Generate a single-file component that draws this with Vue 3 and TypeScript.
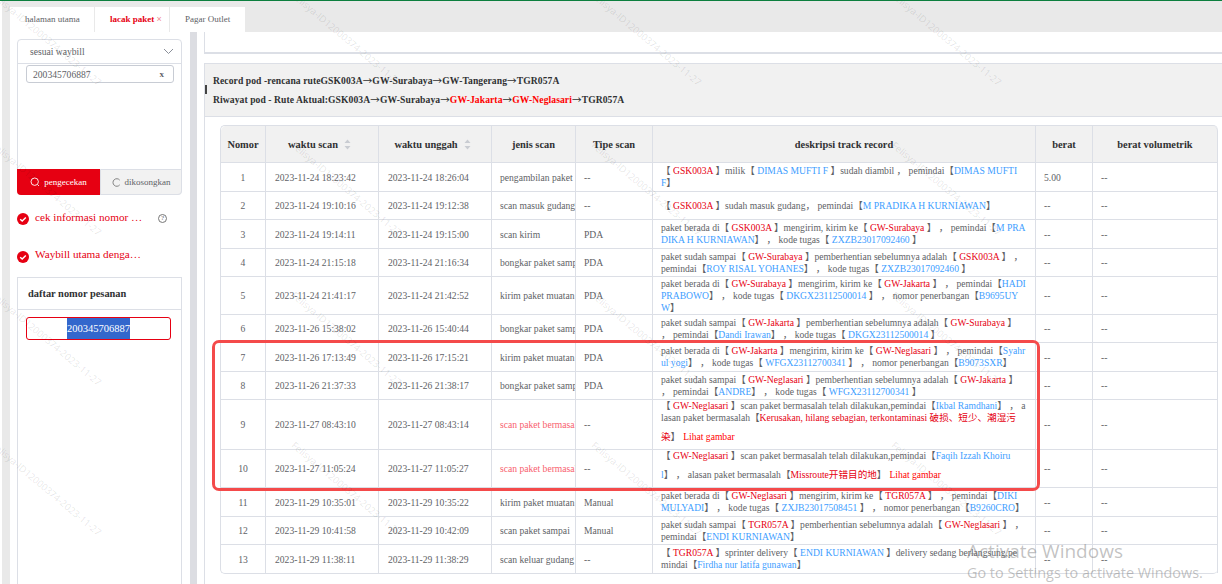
<script setup lang="ts">
interface Row {
  no: number
  scan: string
  upload: string
  type: string
  tipe: string
  desc: string
  berat: string
  h: number
  warn?: boolean
}

const rows: Row[] = [
  { no: 1, scan: '2023-11-24 18:23:42', upload: '2023-11-24 18:26:04', type: 'pengambilan paket', tipe: '--', berat: '5.00', h: 29, desc: '【 ~GSK003A~ 】milik【 ^DIMAS MUFTI F^ 】sudah diambil ， pemindai【^DIMAS MUFTI F^】' },
  { no: 2, scan: '2023-11-24 19:10:16', upload: '2023-11-24 19:12:38', type: 'scan masuk gudang', tipe: '--', berat: '--', h: 28, desc: '【 ~GSK003A~ 】sudah masuk gudang， pemindai【^M PRADIKA H KURNIAWAN^】' },
  { no: 3, scan: '2023-11-24 19:14:11', upload: '2023-11-24 19:15:00', type: 'scan kirim', tipe: 'PDA', berat: '--', h: 29, desc: 'paket berada di【 ~GSK003A~ 】mengirim, kirim ke【 ~GW-Surabaya~ 】 ， pemindai【^M PRADIKA H KURNIAWAN^】 ， kode tugas【 ^ZXZB23017092460^ 】' },
  { no: 4, scan: '2023-11-24 21:15:18', upload: '2023-11-24 21:16:34', type: 'bongkar paket sampai', tipe: 'PDA', berat: '--', h: 28, desc: 'paket sudah sampai【 ~GW-Surabaya~ 】pemberhentian sebelumnya adalah【 ~GSK003A~ 】 ， pemindai【^ROY RISAL YOHANES^】 ， kode tugas【 ^ZXZB23017092460^ 】' },
  { no: 5, scan: '2023-11-24 21:41:17', upload: '2023-11-24 21:42:52', type: 'kirim paket muatan', tipe: 'PDA', berat: '--', h: 38, desc: 'paket berada di【 ~GW-Surabaya~ 】mengirim, kirim ke【 ~GW-Jakarta~ 】 ， pemindai【^HADI PRABOWO^】 ， kode tugas【 ^DKGX23112500014^ 】 ， nomor penerbangan【^B9695UYW^】' },
  { no: 6, scan: '2023-11-26 15:38:02', upload: '2023-11-26 15:40:44', type: 'bongkar paket sampai', tipe: 'PDA', berat: '--', h: 28, desc: 'paket sudah sampai【 ~GW-Jakarta~ 】pemberhentian sebelumnya adalah【 ~GW-Surabaya~ 】 ， pemindai【^Dandi Irawan^】 ， kode tugas【 ^DKGX23112500014^ 】' },
  { no: 7, scan: '2023-11-26 17:13:49', upload: '2023-11-26 17:15:21', type: 'kirim paket muatan', tipe: 'PDA', berat: '--', h: 29, desc: 'paket berada di【 ~GW-Jakarta~ 】mengirim, kirim ke【 ~GW-Neglasari~ 】 ， pemindai【^Syahrul yogi^】 ， kode tugas【 ^WFGX23112700341^ 】 ， nomor penerbangan【^B9073SXR^】' },
  { no: 8, scan: '2023-11-26 21:37:33', upload: '2023-11-26 21:38:17', type: 'bongkar paket sampai', tipe: 'PDA', berat: '--', h: 28, desc: 'paket sudah sampai【 ~GW-Neglasari~ 】pemberhentian sebelumnya adalah【 ~GW-Jakarta~ 】 ， pemindai【^ANDRE^】 ， kode tugas【 ^WFGX23112700341^ 】' },
  { no: 9, scan: '2023-11-27 08:43:10', upload: '2023-11-27 08:43:14', type: 'scan paket bermasalah', tipe: '--', berat: '--', h: 49, warn: true, desc: '【 ~GW-Neglasari~ 】scan paket bermasalah telah dilakukan,pemindai【^Ikbal Ramdhani^】 ， alasan paket bermasalah【~Kerusakan, hilang sebagian, terkontaminasi 破损、短少、潮湿污染~】@Lihat gambar@' },
  { no: 10, scan: '2023-11-27 11:05:24', upload: '2023-11-27 11:05:27', type: 'scan paket bermasalah', tipe: '--', berat: '--', h: 38, warn: true, desc: '【 ~GW-Neglasari~ 】scan paket bermasalah telah dilakukan,pemindai【^Faqih Izzah Khoiru\nl^】 ， alasan paket bermasalah【~Missroute开错目的地~】@Lihat gambar@' },
  { no: 11, scan: '2023-11-29 10:35:01', upload: '2023-11-29 10:35:22', type: 'kirim paket muatan', tipe: 'Manual', berat: '--', h: 29, desc: 'paket berada di【 ~GW-Neglasari~ 】mengirim, kirim ke【 ~TGR057A~ 】 ， pemindai【^DIKI MULYADI^】 ， kode tugas【 ^ZXJB23017508451^ 】 ， nomor penerbangan【^B9260CRO^】' },
  { no: 12, scan: '2023-11-29 10:41:58', upload: '2023-11-29 10:42:09', type: 'scan paket sampai', tipe: 'Manual', berat: '--', h: 28, desc: 'paket sudah sampai【 ~TGR057A~ 】pemberhentian sebelumnya adalah【 ~GW-Neglasari~ 】 ， pemindai【^ENDI KURNIAWAN^】' },
  { no: 13, scan: '2023-11-29 11:38:11', upload: '2023-11-29 11:38:29', type: 'scan keluar gudang', tipe: '--', berat: '--', h: 28, desc: '【 ~TGR057A~ 】sprinter delivery【 ^ENDI KURNIAWAN^ 】delivery sedang berlangsung,pe\nmindai【^Firdha nur latifa gunawan^】' },
]

const parts = (s: string) =>
  s
    .split(/(~[^~]*~|\^[^^]*\^|@[^@]*@)/)
    .filter(Boolean)
    .map((p) => {
      const k = p[0]
      if (k === '~') return { c: 'red', t: p.slice(1, -1) }
      if (k === '^') return { c: 'blue', t: p.slice(1, -1) }
      if (k === '@') return { c: 'pic', t: p.slice(1, -1) }
      return { c: '', t: p }
    })

const routes = [
  [
    { t: 'Record pod -rencana ruteGSK003A', hot: false },
    { t: 'GW-Surabaya', hot: false },
    { t: 'GW-Tangerang', hot: false },
    { t: 'TGR057A', hot: false },
  ],
  [
    { t: 'Riwayat pod - Rute Aktual:GSK003A', hot: false },
    { t: 'GW-Surabaya', hot: false },
    { t: 'GW-Jakarta', hot: true },
    { t: 'GW-Neglasari', hot: true },
    { t: 'TGR057A', hot: false },
  ],
]

const marks: { x: number; y: number }[] = []
for (let j = 0; j < 4; j++) {
  for (let i = 0; i < 4; i++) marks.push({ x: 100 + i * 300, y: 83 + j * 150 })
}
</script>

<template>
  <div class="page">
    <div class="tabbar">
      <div class="tab">halaman utama</div>
      <div class="tab active">lacak paket <span class="close">×</span></div>
      <div class="tab">Pagar Outlet</div>
    </div>

    <div class="main">
      <aside class="side">
        <div class="query">
          <div class="select">
            <span>sesuai waybill</span>
            <svg class="chev" width="11" height="7" viewBox="0 0 11 7"><path d="M1 1l4.5 4.5L10 1" fill="none" stroke="#8a8f99" stroke-width="1" /></svg>
          </div>
          <div class="input"><span>200345706887</span><b>x</b></div>
          <div class="spacer"></div>
          <div class="btns">
            <div class="btn go">
              <svg width="10" height="10" viewBox="0 0 10 10"><circle cx="4.7" cy="4.7" r="3.7" fill="none" stroke="#fff" stroke-width=".9" /><path d="M7.5 7.5L9 9" stroke="#fff" stroke-width=".9" /></svg>
              pengecekan
            </div>
            <div class="btn clear">
              <svg width="9" height="9" viewBox="0 0 10 10"><path d="M8.6 2.4A4.2 4.2 0 1 0 8.6 7.6" fill="none" stroke="#777" stroke-width="1" /></svg>
              dikosongkan
            </div>
          </div>
        </div>

        <div class="notice first">
          <svg class="tick" width="12" height="12" viewBox="0 0 12 12"><circle cx="6" cy="6" r="6" fill="#e60012" /><path d="M3.2 6.2l2 1.8 3.6-3.6" fill="none" stroke="#fff" stroke-width="1.4" /></svg>
          <span class="ntext">cek informasi nomor …</span>
          <span class="help">?</span>
        </div>
        <div class="notice second">
          <svg class="tick" width="12" height="12" viewBox="0 0 12 12"><circle cx="6" cy="6" r="6" fill="#e60012" /><path d="M3.2 6.2l2 1.8 3.6-3.6" fill="none" stroke="#fff" stroke-width="1.4" /></svg>
          <span class="ntext">Waybill utama denga…</span>
        </div>

        <div class="orders">
          <div class="orders-head">daftar nomor pesanan</div>
          <div class="order-item"><span class="picked">200345706887</span></div>
        </div>
      </aside>

      <div class="gutter"></div>

      <section class="content">
        <div class="blank"></div>
        <div class="route">
          <p v-for="(line, l) in routes" :key="l">
            <template v-for="(seg, i) in line" :key="i"><span v-if="i" class="arrow">→</span><span :class="{ hot: seg.hot }">{{ seg.t }}</span></template>
          </p>
        </div>
        <div class="table-wrap">
          <table>
            <colgroup>
              <col class="c1" /><col class="c2" /><col class="c2" /><col class="c4" />
              <col class="c5" /><col class="c6" /><col class="c7" /><col class="c8" />
            </colgroup>
            <thead>
              <tr>
                <th>Nomor</th>
                <th>waktu scan<svg class="sort" width="7" height="11" viewBox="0 0 7 11"><path d="M3.5 0.5L6.5 4H.5zM3.5 10.5L.5 7h6z" fill="#c9ccd2" /></svg></th>
                <th>waktu unggah<svg class="sort" width="7" height="11" viewBox="0 0 7 11"><path d="M3.5 0.5L6.5 4H.5zM3.5 10.5L.5 7h6z" fill="#c9ccd2" /></svg></th>
                <th>jenis scan</th>
                <th>Tipe scan</th>
                <th>deskripsi track record</th>
                <th>berat</th>
                <th>berat volumetrik</th>
              </tr>
            </thead>
            <tbody>
              <tr v-for="r in rows" :key="r.no" :style="{ height: r.h + 'px' }">
                <td class="no">{{ r.no }}</td>
                <td class="time">{{ r.scan }}</td>
                <td class="time">{{ r.upload }}</td>
                <td class="clip" :class="{ warn: r.warn }">{{ r.type }}</td>
                <td>{{ r.tipe }}</td>
                <td class="desc"><span v-for="(p, i) in parts(r.desc)" :key="i" :class="p.c">{{ p.t }}</span></td>
                <td>{{ r.berat }}</td>
                <td>--</td>
              </tr>
            </tbody>
          </table>
        </div>
      </section>
    </div>

    <div class="callout"></div>

    <div class="marks">
      <span v-for="(m, i) in marks" :key="i" class="mark" :style="{ right: 1222 - m.x + 'px', top: m.y - 7 + 'px' }">Felisya-ID12000374-2023-11-27</span>
    </div>

    <div class="activate">
      <div class="a1">Activate Windows</div>
      <div class="a2">Go to Settings to activate Windows.</div>
    </div>
  </div>
</template>

<style>
html, body { margin: 0; padding: 0; background: #fff; }
</style>

<style scoped>
* { box-sizing: border-box; }
.page {
  position: relative;
  width: 1222px;
  height: 584px;
  overflow: hidden;
  font-family: "Liberation Serif", "Noto Sans CJK SC", serif;
  font-size: 9.6px;
  color: #606266;
  border-top: 1px solid #0c7f3e;
  display: flex;
  flex-direction: column;
  padding-left: 2px;
}
.tabbar {
  height: 31px;
  flex: none;
  background: #e9e9e9;
  padding: 6px 0 0 8px;
  display: flex;
  gap: 1px;
}
.tab {
  background: #fff;
  height: 25px;
  line-height: 24px;
  padding: 0 15px;
  font-size: 9px;
  color: #606266;
  white-space: nowrap;
}
.tab:first-child { width: 84px; }
.tab:nth-child(2) { width: 74px; }
.tab:nth-child(3) { width: 75px; }
.active { color: #e60012; font-weight: 700; }
.close { color: #f08a92; font-family: "Liberation Sans", sans-serif; font-size: 9px; font-weight: 400; }

.main {
  flex: 1;
  min-height: 0;
  display: flex;
  background: #e9e9e9;
  padding-left: 8px;
}
.side {
  width: 180px;
  flex: none;
  background: #fff;
  padding: 7px 8px 0 7px;
  display: flex;
  flex-direction: column;
}
.gutter { width: 7px; flex: none; background: #dcdde2; }
.query {
  height: 156px;
  border: 1px solid #dcdfe6;
  border-radius: 4px;
  display: flex;
  flex-direction: column;
}
.select {
  height: 24px;
  flex: none;
  border-bottom: 1px solid #dcdfe6;
  padding: 0 7px 0 12px;
  display: flex;
  align-items: center;
  justify-content: space-between;
}
.input {
  margin: 1px 7px 0 8px;
  height: 18px;
  flex: none;
  border: 1px solid #c8ccd4;
  border-radius: 3px;
  padding: 0 9px 0 6px;
  display: flex;
  align-items: center;
  justify-content: space-between;
}
.input b { font-size: 9px; }
.spacer { flex: 1; }
.btns { height: 26px; flex: none; display: flex; margin: 0 -1px -1px -1px; }
.btn {
  display: flex;
  align-items: center;
  justify-content: center;
  gap: 4px;
  line-height: 1;
  font-size: 9px;
}
.go { width: 83px; background: #e60012; color: #fff; border-radius: 0 0 0 4px; }
.clear {
  flex: 1;
  background: #f2f2f2;
  color: #606266;
  border: 1px solid #dcdfe6;
  border-radius: 0 0 4px 0;
}
.notice {
  display: flex;
  align-items: flex-start;
  position: relative;
  font-size: 11.2px;
  color: #e60012;
  line-height: 13px;
}
.first { margin-top: 16px; height: 37px; }
.second { height: 29px; }
.tick { flex: none; margin-top: 2px; }
.second .tick { margin-top: 3px; }
.ntext { margin-left: 6px; white-space: nowrap; }
.help {
  position: absolute;
  left: 141px;
  top: 3px;
  width: 9px;
  height: 9px;
  border: 1px solid #777;
  border-radius: 50%;
  font-size: 7px;
  line-height: 7px;
  text-align: center;
  color: #666;
}
.orders {
  flex: 1;
  border: 1px solid #dcdfe6;
  border-bottom: 0;
}
.orders-head {
  height: 32px;
  line-height: 31px;
  border-bottom: 1px solid #dcdfe6;
  padding-left: 10px;
  font-weight: 700;
  font-size: 10.4px;
  color: #303133;
}
.order-item {
  margin: 7px 0 0 8px;
  width: 145px;
  height: 23px;
  border: 1px solid #e60012;
  border-radius: 3px;
  display: flex;
  justify-content: center;
}
.picked {
  background: #3367cc;
  color: #fff;
  font-size: 10.5px;
  line-height: 21px;
}

.content {
  flex: 1;
  min-width: 0;
  background: #fff;
  padding-left: 7px;
  display: flex;
  flex-direction: column;
}
.blank {
  height: 22px;
  flex: none;
  border-left: 1px solid #dcdfe6;
  border-bottom: 2px solid #dcdfe6;
}
.route {
  margin-top: 9px;
  height: 54px;
  flex: none;
  background: #f1f1f1;
  border: 1px solid #dcdfe6;
  border-right: 0;
  padding: 10px 0 0 8px;
  font-weight: 700;
  font-size: 9.6px;
  letter-spacing: 0.08px;
  color: #303133;
  position: relative;
}
.route::before {
  content: "";
  position: absolute;
  left: 0;
  top: 21px;
  width: 2px;
  height: 9px;
  background: #444;
}
.route p { margin: 0 0 6px; line-height: 12px; }
.hot { color: #f00; }
.arrow { font-family: "Noto Sans CJK SC", sans-serif; font-weight: 400; }
.table-wrap {
  flex: 1;
  border-left: 1px solid #dcdfe6;
  padding: 8px 0 0 15px;
}
table {
  table-layout: fixed;
  width: 998px;
  border-collapse: separate;
  border-spacing: 0;
  border-top: 1px solid #dcdfe6;
  border-left: 1px solid #dcdfe6;
  border-radius: 5px;
  border-bottom: 1px solid #dcdfe6;
}
.c1 { width: 45px; }
.c2 { width: 113px; }
.c4 { width: 84px; }
.c5 { width: 77px; }
.c6 { width: 383px; }
.c7 { width: 57px; }
.c8 { width: 125px; }
th {
  height: 37px;
  background: #f1f1f1;
  font-weight: 700;
  font-size: 10.4px;
  color: #303133;
  border-right: 1px solid #dcdfe6;
  border-bottom: 1px solid #dcdfe6;
  padding: 0;
  text-align: center;
}
th:first-child { border-top-left-radius: 5px; }
th:last-child { border-top-right-radius: 5px; }
.sort { margin: 0 5px 0 6px; vertical-align: -2px; }
td {
  padding: 1px 8px 0;
  line-height: 12px;
  border-right: 1px solid #dcdfe6;
  border-bottom: 1px solid #dcdfe6;
  vertical-align: middle;
  white-space: nowrap;
}
tbody tr:last-child td { border-bottom: 0; }
.no { text-align: center; }
.time { padding-left: 9px; }
.clip { overflow: hidden; padding-right: 0; }
.warn { color: #f8606e; }
.desc { padding-top: 0; white-space: pre-line; word-break: break-all; }
.red { color: #e60012; }
.blue { color: #409eff; }
.pic {
  color: #f00;
  display: inline-block;
  line-height: 25px;
  height: 25px;
  margin-left: 3px;
}

.callout {
  position: absolute;
  left: 212px;
  top: 339px;
  width: 828px;
  height: 151px;
  border: 3.5px solid #f44a4a;
  border-radius: 7px;
  pointer-events: none;
}
.marks { position: absolute; inset: 0; pointer-events: none; overflow: hidden; }
.mark {
  position: absolute;
  font-family: "Open Sans", sans-serif;
  font-size: 9.6px;
  line-height: 14px;
  white-space: nowrap;
  color: rgba(0, 0, 0, 0.11);
  transform: rotate(40deg);
  transform-origin: right center;
}
.activate {
  position: absolute;
  left: 967px;
  top: 537px;
  color: rgba(120, 120, 120, 0.45);
  font-family: "Open Sans", sans-serif;
  pointer-events: none;
  white-space: nowrap;
}
.a1 { font-size: 19px; line-height: 26px; }
.a2 { font-size: 14.4px; line-height: 18px; }
</style>
